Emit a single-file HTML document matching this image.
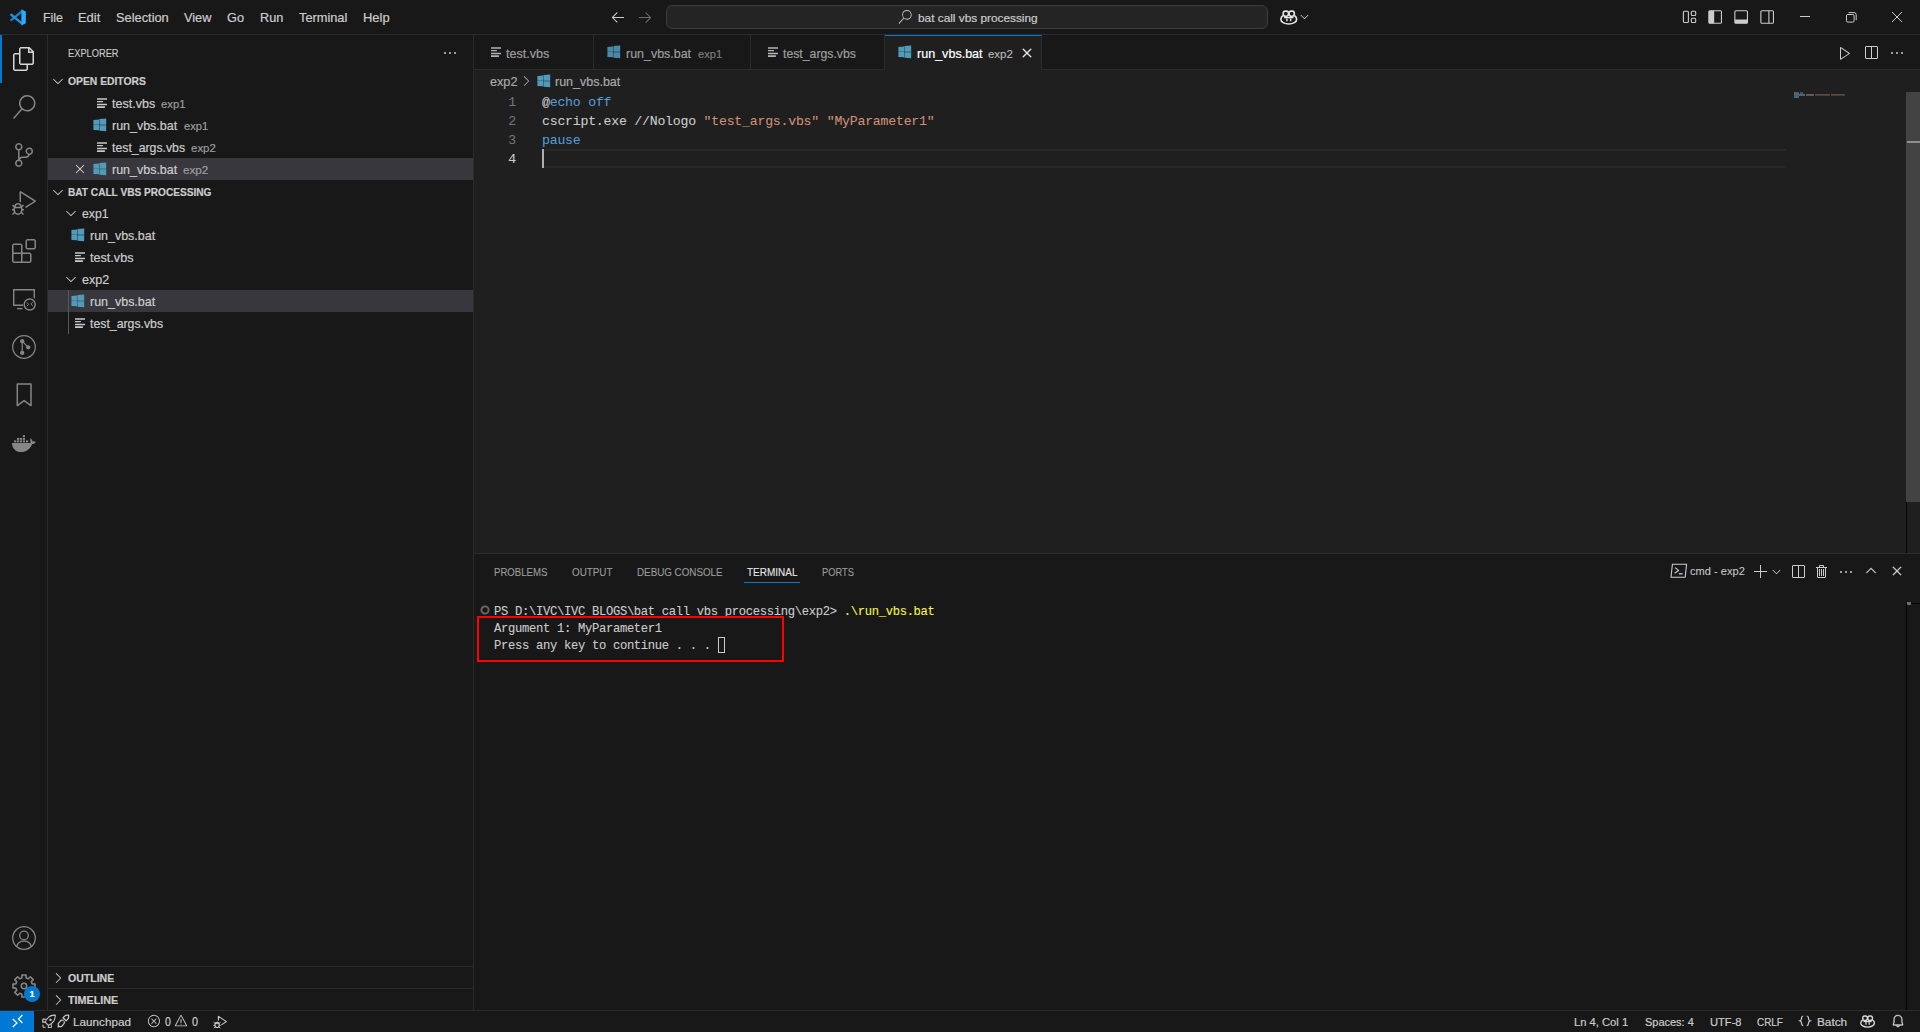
<!DOCTYPE html>
<html lang="en">
<head>
<meta charset="utf-8">
<title>run_vbs.bat - bat call vbs processing - Visual Studio Code</title>
<style>
html,body{margin:0;padding:0;}
body{width:1920px;height:1032px;overflow:hidden;background:#181818;position:relative;
  font-family:"Liberation Sans",sans-serif;font-size:12.5px;color:#cccccc;}
*{box-sizing:border-box;}
.abs{position:absolute;}
.t{position:absolute;white-space:nowrap;height:20px;line-height:20px;transform-origin:0 50%;-webkit-text-stroke:0.2px;}
svg{position:absolute;overflow:visible;}
.f13{font-size:12.6px;}
.f12{font-size:11.7px;}
.f11{font-size:10.7px;-webkit-text-stroke:0.1px;}
.f11.b{-webkit-text-stroke:0.2px;}
.fd{font-size:11.4px;color:#9d9d9d;}
.b{font-weight:bold;}
#titlebar{left:0;top:0;width:1920px;height:35px;background:#181818;border-bottom:1px solid #2b2b2b;}
#activity{left:0;top:35px;width:48px;height:975px;background:#181818;border-right:1px solid #2b2b2b;}
#sidebar{left:48px;top:35px;width:426px;height:975px;background:#181818;border-right:1px solid #2b2b2b;}
#tabs{left:474px;top:35px;width:1446px;height:35px;background:#181818;border-bottom:1px solid #2b2b2b;}
#editor{left:474px;top:70px;width:1446px;height:483px;background:#1f1f1f;}
#panel{left:474px;top:553px;width:1446px;height:457px;background:#181818;border-top:1px solid #2b2b2b;}
#status{left:0;top:1010px;width:1920px;height:22px;background:#181818;border-top:1px solid #2b2b2b;}
.row{position:absolute;left:0;width:425px;height:22px;}
.sel{background:#37373d;}
.tab{position:absolute;top:0;height:35px;border-right:1px solid #2b2b2b;}
.tab.active{background:#1f1f1f;border-top:1px solid #0078d4;height:35px;}
.code{-webkit-text-stroke:0.08px;font-family:"Liberation Mono",monospace;font-size:13.2px;letter-spacing:-0.22px;height:19px;line-height:19px;color:#cccccc;}
.ln{-webkit-text-stroke:0.08px;font-family:"Liberation Mono",monospace;font-size:13.2px;letter-spacing:-0.22px;height:19px;line-height:19px;color:#6e7681;}
.kw{color:#569cd6;}
.str{color:#ce9178;}
.term{-webkit-text-stroke:0.1px;font-family:"Liberation Mono",monospace;font-size:12.2px;letter-spacing:-0.32px;height:17px;line-height:17px;color:#cccccc;}
</style>
</head>
<body>

<!-- TITLE BAR -->
<div id="titlebar" class="abs">
  <svg id="logo" style="left:10px;top:8.6px" width="16" height="16.8" viewBox="0 0 100 100" preserveAspectRatio="none">
    <path d="M73 15 L8 66" stroke="#147fcb" stroke-width="14" stroke-linecap="round" fill="none"/>
    <path d="M73 85 L8 34" stroke="#1c93e2" stroke-width="14" stroke-linecap="round" fill="none"/>
    <path d="M71 2 L99 15 V85 L71 98 Z" fill="#2aaaf9"/>
  </svg>
  <div class="abs" id="cmdc" style="left:666px;top:5px;width:602px;height:24px;border:1px solid #3c3c3c;border-radius:6px;background:#242424;"></div>
  <svg style="left:610px;top:9px" width="16" height="16" viewBox="0 0 16 16"><path d="M7 3.093l-5 5V8.800l5 5 .707-.707-4.146-4.147H14v-1H3.560L7.707 3.800 7 3.093z" fill="#cccccc" /></svg>
  <svg style="left:636.5px;top:9px" width="16" height="16" viewBox="0 0 16 16"><path d="M9 13.887l5-5V8.180l-5-5-.707.707 4.146 4.147H2v1h10.440L8.293 13.180l.707.707z" fill="#6b6b6b" /></svg>
  <svg style="left:898.3px;top:10px" width="14" height="14" viewBox="0 0 24 24"><path d="M15.250 0a8.250 8.250 0 0 0-6.180 13.720L1 22.880l1.120 1 8.050-9.120A8.251 8.251 0 1 0 15.250.010V0zm0 15a6.750 6.750 0 1 1 0-13.500 6.750 6.750 0 0 1 0 13.500z" fill="#cccccc" /></svg>
  <svg style="left:1279.7px;top:9.6px" width="17.5" height="15" viewBox="0 0 18 15" preserveAspectRatio="none" fill="none" stroke="#e4e4e4" stroke-width="1.7" stroke-linejoin="round"><rect x="3.3" y="1.1" width="5.4" height="5.2" rx="2.2"/><rect x="9.3" y="1.1" width="5.4" height="5.2" rx="2.2"/><path d="M3.2 5.6 C1.4 6.6 0.9 8 0.9 9.6 C0.9 11.8 4.4 14 9 14 C13.6 14 17.1 11.8 17.1 9.6 C17.1 8 16.6 6.6 14.8 5.6"/><path d="M4.2 7.6 H13.8" stroke-width="1.4"/><path d="M7.1 8.4 V11.2 M10.9 8.4 V11.2" stroke-width="1.5"/></svg>
  <svg style="left:1298.2px;top:10.4px" width="13" height="13" viewBox="0 0 16 16"><path d="M7.976 10.072l4.357-4.357.62.618L8.284 11h-.618L3 6.333l.619-.618 4.357 4.357z" fill="#cccccc" /></svg>
  <svg style="left:1682px;top:10px" width="16" height="14" viewBox="0 0 16 14" fill="none" stroke="#cccccc" stroke-width="1.1"><rect x="1.4" y="1.3" width="5" height="11.2" rx="1"/><rect x="9.3" y="1.3" width="4.4" height="4.2" rx="1"/><rect x="9.3" y="8.3" width="4.4" height="4.2" rx="1"/></svg>
  <svg style="left:1707.5px;top:10px" width="16" height="14" viewBox="0 0 16 14"><rect x="0.85" y="0.75" width="12.6" height="12.5" rx="1.1" fill="none" stroke="#cccccc" stroke-width="1.1"/><path d="M0.9 1.6 Q0.9 0.8 1.7 0.8 H6.2 V13.2 H1.700 Q0.900 13.200 0.900 12.400 Z" fill="#cccccc"/></svg>
  <svg style="left:1733.5px;top:10px" width="16" height="14" viewBox="0 0 16 14"><rect x="0.85" y="0.75" width="12.6" height="12.5" rx="1.1" fill="none" stroke="#cccccc" stroke-width="1.1"/><path d="M0.9 9.5 H13.4 V12.4 Q13.4 13.2 12.6 13.2 H1.700 Q0.900 13.200 0.900 12.400 Z" fill="#cccccc"/></svg>
  <svg style="left:1759.5px;top:10px" width="16" height="14" viewBox="0 0 16 14" fill="none" stroke="#cccccc" stroke-width="1.1"><rect x="0.85" y="0.75" width="12.6" height="12.5" rx="1.1"/><path d="M8.9 0.8 V13.2"/></svg>
  <svg style="left:1800px;top:12px" width="10" height="10" viewBox="0 0 10 10" stroke="#cccccc" stroke-width="1" fill="none"><path d="M0 4.5 H10"/></svg>
  <svg style="left:1845.5px;top:12px" width="11" height="11" viewBox="0 0 11 11" stroke="#cccccc" stroke-width="1" fill="none"><rect x="0.5" y="2.5" width="7.6" height="7.6" rx="1.3"/><path d="M2.6 0.6 H8 Q10.2 0.6 10.2 2.8 V8.2"/></svg>
  <svg style="left:1892px;top:12px" width="10" height="10" viewBox="0 0 10 10" stroke="#cccccc" stroke-width="1" fill="none"><path d="M0 0 L10 10 M10 0 L0 10"/></svg>
  <div class="t f13" id="m-file" style="left:42.54px;top:8.00px;transform:scaleX(0.9856);">File</div>
  <div class="t f13" id="m-edit" style="left:77.77px;top:8.00px;transform:scaleX(1.0260);">Edit</div>
  <div class="t f13" id="m-sel" style="left:115.71px;top:8.00px;transform:scaleX(1.0181);">Selection</div>
  <div class="t f13" id="m-view" style="left:183.80px;top:8.00px;transform:scaleX(1.0127);">View</div>
  <div class="t f13" id="m-go" style="left:227.17px;top:8.00px;transform:scaleX(1.0117);">Go</div>
  <div class="t f13" id="m-run" style="left:259.89px;top:8.00px;transform:scaleX(1.0041);">Run</div>
  <div class="t f13" id="m-term" style="left:298.79px;top:8.00px;transform:scaleX(1.0153);">Terminal</div>
  <div class="t f13" id="m-help" style="left:362.77px;top:8.00px;transform:scaleX(1.0290);">Help</div>
  <div class="t f12" id="cc" style="left:917.89px;top:8.00px;transform:scaleX(1.0119);">bat call vbs processing</div>
</div>

<!-- ACTIVITY BAR -->
<div id="activity" class="abs">
  <div class="abs" style="left:0;top:0;width:2px;height:48px;background:#0078d4"></div>
  <svg style="left:12px;top:12px" width="24" height="24" viewBox="0 0 24 24"><path d="M17.5 0h-9L7 1.5V6H2.5L1 7.5v15.07L2.5 24h12.07L16 22.57V18h4.7l1.3-1.43V4.5L17.5 0zm0 2.12l2.38 2.38H17.5V2.12zm-3 20.38h-12v-15H7v9.07L8.5 18h6v4.5zm6-6h-12v-15H16V6h4.5v10.5z" fill="#d7d7d7" /></svg>
  <svg style="left:12px;top:60px" width="24" height="24" viewBox="0 0 24 24"><path d="M15.25 0a8.25 8.25 0 0 0-6.18 13.72L1 22.88l1.12 1 8.05-9.12A8.251 8.251 0 1 0 15.25.01V0zm0 15a6.75 6.75 0 1 1 0-13.5 6.75 6.75 0 0 1 0 13.5z" fill="#868686" /></svg>
  <svg style="left:12px;top:108px" width="24" height="24" viewBox="0 0 24 24"><path d="M21.007 8.222A3.738 3.738 0 0 0 15.045 5.2a3.737 3.737 0 0 0 1.156 6.583 2.988 2.988 0 0 1-2.668 1.67h-2.99a4.456 4.456 0 0 0-2.989 1.165V7.4a3.737 3.737 0 1 0-1.494 0v9.117a3.776 3.776 0 1 0 1.816.099 2.99 2.99 0 0 1 2.668-1.667h2.99a4.484 4.484 0 0 0 4.223-3.039 3.736 3.736 0 0 0 3.25-3.687zM4.565 3.738a2.242 2.242 0 1 1 4.484 0 2.242 2.242 0 0 1-4.484 0zm4.484 16.441a2.242 2.242 0 1 1-4.484 0 2.242 2.242 0 0 1 4.484 0zm8.221-9.715a2.242 2.242 0 1 1 0-4.485 2.242 2.242 0 0 1 0 4.485z" fill="#868686" /></svg>
  <svg style="left:12px;top:156px" width="24" height="24" viewBox="0 0 24 24"><path d="M10.94 13.5l-1.32 1.32a3.73 3.73 0 0 0-7.24 0L1.06 13.5 0 14.56l1.72 1.72-.22.22V18H0v1.5h1.5v.08c.077.489.214.966.41 1.42L0 22.94 1.06 24l1.65-1.65A4.308 4.308 0 0 0 6 24a4.31 4.31 0 0 0 3.29-1.65L10.94 24 12 22.94 10.09 21c.198-.464.336-.951.41-1.45v-.1H12V18h-1.5v-1.5l-.22-.22L12 14.56l-1.06-1.06zM6 13.5a2.25 2.25 0 0 1 2.25 2.25h-4.5A2.25 2.25 0 0 1 6 13.5zm3 6a3.33 3.33 0 0 1-3 3 3.33 3.33 0 0 1-3-3v-2.25h6v2.25zm14.76-9.9v1.26L13.5 17.37V15.6l8.5-5.37L9 2v9.46a5.07 5.07 0 0 0-1.5-.72V.63L8.64 0l15.12 9.6z" fill="#868686" /></svg>
  <svg style="left:12px;top:204px" width="24" height="24" viewBox="0 0 24 24"><path d="M13.5 1.5L15 0h7.5L24 1.5V9l-1.5 1.5H15L13.5 9V1.5zm1.5 0V9h7.5V1.5H15zM0 15V6l1.5-1.5H9L10.5 6v7.5H18l1.5 1.5v7.5L18 24H1.5L0 22.5V15zm9-1.5V6H1.5v7.5H9zM9 15H1.5v7.5H9V15zm1.500 7.500H18V15h-7.500v7.500z" fill="#868686" /></svg>
  <svg style="left:12px;top:252px" width="24" height="24" viewBox="0 0 24 24" fill="none" stroke="#868686" stroke-width="1.4"><path d="M11.2 18.2 H1.7 V2.7 H22.3 V11.2"/><path d="M5 21.6 H10.6"/><circle cx="17.7" cy="17.5" r="5.5"/><path d="M14.9 15.4 L16.6 17.3 L14.9 19.2 M20.7 15.0 L19.0 16.9 L20.7 18.8" stroke-width="1"/></svg>
  <svg style="left:12px;top:300px" width="24" height="24" viewBox="0 0 24 24" fill="none" stroke="#868686"><circle cx="12" cy="12" r="11.3" stroke-width="1.2"/><path d="M10.2 6.2 V18 M10.2 6.2 L16.2 12.3" stroke-width="1.2"/><circle cx="10.2" cy="6.2" r="2.15" fill="#868686" stroke="none"/><circle cx="16.2" cy="12.3" r="2.15" fill="#868686" stroke="none"/><circle cx="10.2" cy="17.9" r="2.15" fill="#868686" stroke="none"/></svg>
  <svg style="left:12px;top:348px" width="24" height="24" viewBox="0 0 24 24" fill="none" stroke="#868686" stroke-width="1.5" stroke-linejoin="round"><path d="M5.3 1.1 H19.0 V22.6 L12.15 17.6 L5.3 22.6 Z"/></svg>
  <svg style="left:11px;top:398px" width="26" height="20" viewBox="0 0 26 20" fill="#868686"><path d="M0.9 9.9 H19.6 C19.3 8 19 6.5 19.4 5.2 C20.8 6 21.4 7.4 21.6 8.4 C22.6 8 23.8 8.2 24.7 8.9 C24 10.4 22.6 11 21.2 10.9 C19.4 15.6 15.4 19 10.2 19 C4.6 19 1.2 15.4 0.9 9.9 Z"/><rect x="3.1" y="7.35" width="2.2" height="2.0"/><rect x="5.95" y="7.35" width="2.2" height="2.0"/><rect x="8.85" y="7.35" width="2.2" height="2.0"/><rect x="11.8" y="7.35" width="2.2" height="2.0"/><rect x="14.9" y="7.35" width="2.2" height="2.0"/><rect x="5.95" y="4.9" width="2.2" height="2.0"/><rect x="8.85" y="4.9" width="2.2" height="2.0"/><rect x="11.8" y="4.9" width="2.2" height="2.0"/><rect x="11.8" y="2.15" width="2.2" height="2.0"/></svg>
  <svg style="left:12px;top:891px" width="24" height="24" viewBox="0 0 24 24" fill="none" stroke="#868686" stroke-width="1.3"><circle cx="12" cy="12" r="11.3"/><circle cx="12" cy="9.4" r="4.3"/><path d="M4.8 20.6 C5.6 16.6 8.6 15.2 12 15.2 C15.4 15.2 18.4 16.6 19.2 20.6"/></svg>
  <svg style="left:0;top:0" width="48" height="48"><path d="M21.90 942.87 L21.96 939.99 L26.04 939.99 L26.10 942.87 L28.26 943.76 L30.34 941.77 L33.23 944.66 L31.24 946.74 L32.13 948.90 L35.01 948.96 L35.01 953.04 L32.13 953.10 L31.24 955.26 L33.23 957.34 L30.34 960.23 L28.26 958.24 L26.10 959.13 L26.04 962.01 L21.96 962.01 L21.90 959.13 L19.74 958.24 L17.66 960.23 L14.77 957.34 L16.76 955.26 L15.87 953.10 L12.99 953.04 L12.99 948.96 L15.87 948.90 L16.76 946.74 L14.77 944.66 L17.66 941.77 L19.74 943.76 Z" fill="none" stroke="#868686" stroke-width="1.6" stroke-linejoin="round"/><circle cx="24" cy="951" r="2.7" fill="none" stroke="#868686" stroke-width="1.5"/></svg>
  <div class="abs" style="left:24px;top:951px;width:16px;height:16px;border-radius:8px;background:#0078d4"></div>
  <div class="t" style="left:24px;top:951px;width:16px;height:16px;line-height:16px;text-align:center;font-size:9px;font-weight:bold;color:#ffffff">1</div>

</div>

<!-- SIDEBAR -->
<div id="sidebar" class="abs">
  <div class="row sel" style="top:123px"></div>
  <div class="row sel" style="top:255px"></div>
  <div class="abs" style="left:20px;top:255px;width:1px;height:44px;background:#585858"></div>
  <div class="abs" style="left:0;top:931px;width:425px;height:1px;background:#2b2b2b"></div>
  <div class="abs" style="left:0;top:953px;width:425px;height:1px;background:#2b2b2b"></div>
  <svg style="left:394px;top:10px" width="16" height="16" viewBox="0 0 16 16"><path d="M4 8a1 1 0 1 1-2 0 1 1 0 0 1 2 0zm5 0a1 1 0 1 1-2 0 1 1 0 0 1 2 0zm5 0a1 1 0 1 1-2 0 1 1 0 0 1 2 0z" fill="#cccccc" /></svg>
  <svg style="left:2px;top:38px" width="16" height="16" viewBox="0 0 16 16"><path d="M7.976 10.072l4.357-4.357.62.618L8.284 11h-.618L3 6.333l.619-.618 4.357 4.357z" fill="#cccccc" /></svg>
  <svg style="left:2px;top:149px" width="16" height="16" viewBox="0 0 16 16"><path d="M7.976 10.072l4.357-4.357.62.618L8.284 11h-.618L3 6.333l.619-.618 4.357 4.357z" fill="#cccccc" /></svg>
  <svg style="left:15px;top:170px" width="16" height="16" viewBox="0 0 16 16"><path d="M7.976 10.072l4.357-4.357.62.618L8.284 11h-.618L3 6.333l.619-.618 4.357 4.357z" fill="#cccccc" /></svg>
  <svg style="left:15px;top:236px" width="16" height="16" viewBox="0 0 16 16"><path d="M7.976 10.072l4.357-4.357.62.618L8.284 11h-.618L3 6.333l.619-.618 4.357 4.357z" fill="#cccccc" /></svg>
  <svg style="left:2px;top:935px" width="16" height="16" viewBox="0 0 16 16"><path d="M10.072 8.024L5.715 3.667l.618-.62L11 7.716v.618L6.333 13l-.618-.619 4.357-4.357z" fill="#cccccc" /></svg>
  <svg style="left:2px;top:957px" width="16" height="16" viewBox="0 0 16 16"><path d="M10.072 8.024L5.715 3.667l.618-.62L11 7.716v.618L6.333 13l-.618-.619 4.357-4.357z" fill="#cccccc" /></svg>
  <svg style="left:24px;top:126.3px" width="16" height="16" viewBox="0 0 16 16"><path d="M8 8.707l3.646 3.647.708-.707L8.707 8l3.647-3.646-.707-.708L8 7.293 4.354 3.646l-.707.708L7.293 8l-3.646 3.646.707.708L8 8.707z" fill="#cccccc" /></svg>
  <svg style="left:49.1px;top:63px" width="11" height="11" viewBox="0 0 11 11"><path d="M0 0.2 H10 V1.75 H0 Z M0 3.1 H5.9 V4.15 H0 Z M0 5.8 H10 V7.15 H0 Z M0 8.35 H7.9 V9.9 H0 Z" fill="#c8c8c8"/></svg>
  <svg style="left:45px;top:83px" width="14" height="14" viewBox="0 0 14 14"><path d="M0.4 1.95 L6.0 1.6 V6.85 H0.4 Z M0.4 7.1 H6.0 V12.3 L0.4 11.95 Z M6.4 0.95 L13.2 0.5 V6.8 H6.4 Z M6.4 7.15 H13.2 V13.3 L6.4 12.85 Z" fill="#519aba"/></svg>
  <svg style="left:49.1px;top:107px" width="11" height="11" viewBox="0 0 11 11"><path d="M0 0.2 H10 V1.75 H0 Z M0 3.1 H5.9 V4.15 H0 Z M0 5.8 H10 V7.15 H0 Z M0 8.35 H7.9 V9.9 H0 Z" fill="#c8c8c8"/></svg>
  <svg style="left:45px;top:127px" width="14" height="14" viewBox="0 0 14 14"><path d="M0.4 1.95 L6.0 1.6 V6.85 H0.4 Z M0.4 7.1 H6.0 V12.3 L0.4 11.95 Z M6.4 0.95 L13.2 0.5 V6.8 H6.4 Z M6.4 7.15 H13.2 V13.3 L6.4 12.85 Z" fill="#519aba"/></svg>
  <svg style="left:23.1px;top:193px" width="14" height="14" viewBox="0 0 14 14"><path d="M0.4 1.95 L6.0 1.6 V6.85 H0.4 Z M0.4 7.1 H6.0 V12.3 L0.4 11.95 Z M6.4 0.95 L13.2 0.5 V6.8 H6.4 Z M6.4 7.15 H13.2 V13.3 L6.4 12.85 Z" fill="#519aba"/></svg>
  <svg style="left:27.3px;top:217px" width="11" height="11" viewBox="0 0 11 11"><path d="M0 0.2 H10 V1.75 H0 Z M0 3.1 H5.9 V4.15 H0 Z M0 5.8 H10 V7.15 H0 Z M0 8.35 H7.9 V9.9 H0 Z" fill="#c8c8c8"/></svg>
  <svg style="left:23.1px;top:259px" width="14" height="14" viewBox="0 0 14 14"><path d="M0.4 1.95 L6.0 1.6 V6.85 H0.4 Z M0.4 7.1 H6.0 V12.3 L0.4 11.95 Z M6.4 0.95 L13.2 0.5 V6.8 H6.4 Z M6.4 7.15 H13.2 V13.3 L6.4 12.85 Z" fill="#519aba"/></svg>
  <svg style="left:27.3px;top:283px" width="11" height="11" viewBox="0 0 11 11"><path d="M0 0.2 H10 V1.75 H0 Z M0 3.1 H5.9 V4.15 H0 Z M0 5.8 H10 V7.15 H0 Z M0 8.35 H7.9 V9.9 H0 Z" fill="#c8c8c8"/></svg>
  <div class="t f11" id="sb-title" style="left:19.87px;top:8.00px;transform:scaleX(0.8680);">EXPLORER</div>
  <div class="t f11 b" id="oe-h" style="left:19.55px;top:36.00px;transform:scaleX(0.9660);">OPEN EDITORS</div>
  <div class="t f13" id="oe1" style="left:63.89px;top:59.00px;transform:scaleX(0.9944);">test.vbs</div>
  <div class="t fd" id="oe1d" style="left:113.05px;top:59.00px;transform:scaleX(0.9878);">exp1</div>
  <div class="t f13" id="oe2" style="left:63.55px;top:81.00px;transform:scaleX(0.9899);">run_vbs.bat</div>
  <div class="t fd" id="oe2d" style="left:135.50px;top:81.00px;transform:scaleX(0.9775);">exp1</div>
  <div class="t f13" id="oe3" style="left:63.89px;top:103.00px;transform:scaleX(0.9759);">test_args.vbs</div>
  <div class="t fd" id="oe3d" style="left:143.08px;top:103.00px;transform:scaleX(1.0000);">exp2</div>
  <div class="t f13" id="oe4" style="left:63.50px;top:125.00px;transform:scaleX(0.9907);">run_vbs.bat</div>
  <div class="t fd" id="oe4d" style="left:134.65px;top:125.00px;transform:scaleX(1.0269);">exp2</div>
  <div class="t f11 b" id="ws-h" style="left:19.73px;top:147.00px;transform:scaleX(0.9457);">BAT CALL VBS PROCESSING</div>
  <div class="t f13" id="t1" style="left:33.79px;top:169.00px;transform:scaleX(0.9745);">exp1</div>
  <div class="t f13" id="t2" style="left:41.50px;top:191.00px;transform:scaleX(0.9896);">run_vbs.bat</div>
  <div class="t f13" id="t3" style="left:42.19px;top:213.00px;transform:scaleX(1.0028);">test.vbs</div>
  <div class="t f13" id="t4" style="left:33.75px;top:235.00px;transform:scaleX(0.9962);">exp2</div>
  <div class="t f13" id="t5" style="left:41.80px;top:257.00px;transform:scaleX(0.9904);">run_vbs.bat</div>
  <div class="t f13" id="t6" style="left:42.19px;top:279.00px;transform:scaleX(0.9759);">test_args.vbs</div>
  <div class="t f11 b" id="ol" style="left:19.55px;top:933.00px;transform:scaleX(0.9862);">OUTLINE</div>
  <div class="t f11 b" id="tl" style="left:19.58px;top:955.00px;transform:scaleX(1.0080);">TIMELINE</div>
</div>

<!-- TABS -->
<div id="tabs" class="abs">
  <div class="tab" style="left:0;width:120px"></div>
  <div class="tab" style="left:120px;width:157px"></div>
  <div class="tab" style="left:277px;width:134px"></div>
  <div class="tab active" style="left:411px;width:157px"></div>
  <svg style="left:17.3px;top:12px" width="11" height="11" viewBox="0 0 11 11"><path d="M0 0.2 H10 V1.75 H0 Z M0 3.1 H5.9 V4.15 H0 Z M0 5.8 H10 V7.15 H0 Z M0 8.35 H7.9 V9.9 H0 Z" fill="#b4b4b4"/></svg>
  <svg style="left:133px;top:10.3px" width="14" height="14" viewBox="0 0 14 14"><path d="M0.4 1.95 L6.0 1.6 V6.85 H0.4 Z M0.4 7.1 H6.0 V12.3 L0.4 11.95 Z M6.4 0.95 L13.2 0.5 V6.8 H6.4 Z M6.4 7.15 H13.2 V13.3 L6.4 12.85 Z" fill="#4a8aa8"/></svg>
  <svg style="left:294.4px;top:12px" width="11" height="11" viewBox="0 0 11 11"><path d="M0 0.2 H10 V1.75 H0 Z M0 3.1 H5.9 V4.15 H0 Z M0 5.8 H10 V7.15 H0 Z M0 8.35 H7.9 V9.9 H0 Z" fill="#b4b4b4"/></svg>
  <svg style="left:424px;top:10.3px" width="14" height="14" viewBox="0 0 14 14"><path d="M0.4 1.95 L6.0 1.6 V6.85 H0.4 Z M0.4 7.1 H6.0 V12.3 L0.4 11.95 Z M6.4 0.95 L13.2 0.5 V6.8 H6.4 Z M6.4 7.15 H13.2 V13.3 L6.4 12.85 Z" fill="#519aba"/></svg>
  <svg style="left:544.9px;top:10px" width="16" height="16" viewBox="0 0 16 16"><path d="M8 8.707l3.646 3.647.708-.707L8.707 8l3.647-3.646-.707-.708L8 7.293 4.354 3.646l-.707.708L7.293 8l-3.646 3.646.707.708L8 8.707z" fill="#f0f0f0" stroke="#f0f0f0" stroke-width="0.45"/></svg>
  <svg style="left:1362.5px;top:10px" width="16" height="16" viewBox="0 0 16 16"><path d="M3.780 2L3 2.410v12l.780.420 9-6V8l-9-6zM4 13.480V3.350l7.600 5.070L4 13.480z" fill="#cccccc" /></svg>
  <svg style="left:1388.6px;top:10px" width="16" height="16" viewBox="0 0 16 16"><path d="M14 1H3L2 2v11l1 1h11l1-1V2l-1-1zM8 13H3V2h5v11zm6 0H9V2h5v11z" fill="#cccccc" /></svg>
  <svg style="left:1415px;top:10px" width="16" height="16" viewBox="0 0 16 16"><path d="M4 8a1 1 0 1 1-2 0 1 1 0 0 1 2 0zm5 0a1 1 0 1 1-2 0 1 1 0 0 1 2 0zm5 0a1 1 0 1 1-2 0 1 1 0 0 1 2 0z" fill="#cccccc" /></svg>
  <div class="t f13" id="tab1" style="left:32.19px;top:9.00px;transform:scaleX(0.9982);color:#9d9d9d">test.vbs</div>
  <div class="t f13" id="tab2" style="left:151.81px;top:9.00px;transform:scaleX(0.9887);color:#9d9d9d">run_vbs.bat</div>
  <div class="t fd" id="tab2d" style="left:223.86px;top:9.00px;transform:scaleX(0.9735);color:#7c7c7c">exp1</div>
  <div class="t f13" id="tab3" style="left:308.69px;top:9.00px;transform:scaleX(0.9734);color:#9d9d9d">test_args.vbs</div>
  <div class="t f13" id="tab4" style="left:442.89px;top:9.00px;transform:scaleX(0.9967);color:#ffffff">run_vbs.bat</div>
  <div class="t fd" id="tab4d" style="left:513.82px;top:9.00px;transform:scaleX(1.0054);color:#bcbcbc;-webkit-text-stroke:0.1px">exp2</div>
</div>

<!-- EDITOR -->
<div id="editor" class="abs">
  <div class="abs" style="left:68px;top:79px;width:1244px;height:19px;border-top:2px solid #282828;border-bottom:2px solid #282828;"></div>
  <div class="t ln" style="left:34.3px;top:23px">1</div>
  <div class="t ln" style="left:34.3px;top:42px">2</div>
  <div class="t ln" style="left:34.3px;top:61px">3</div>
  <div class="t ln" style="left:34.3px;top:80px;color:#cccccc">4</div>
  <div class="t code" style="left:68px;top:23px">@<span class="kw">echo</span> <span class="kw">off</span></div>
  <div class="t code" style="left:68px;top:42px">cscript.exe //Nologo <span class="str">"test_args.vbs"</span> <span class="str">"MyParameter1"</span></div>
  <div class="t code" style="left:68px;top:61px"><span class="kw">pause</span></div>
  <div class="abs" style="left:68px;top:79px;width:2px;height:19px;background:#aeafad"></div>
  <div class="abs" style="left:1432px;top:22px;width:1px;height:461px;background:#03050a"></div>
  <div class="abs" style="left:1432px;top:22px;width:14px;height:410px;background:#434343"></div>
  <div class="abs" style="left:1433px;top:71px;width:13px;height:2px;background:#8e8e8e"></div>
  <svg style="left:44px;top:3px" width="16" height="16" viewBox="0 0 16 16"><path d="M10.072 8.024L5.715 3.667l.618-.62L11 7.716v.618L6.333 13l-.618-.619 4.357-4.357z" fill="#a9a9a9" /></svg>
  <svg style="left:62.8px;top:4.2px" width="14" height="14" viewBox="0 0 14 14"><path d="M0.4 1.95 L6.0 1.6 V6.85 H0.4 Z M0.4 7.1 H6.0 V12.3 L0.4 11.95 Z M6.4 0.95 L13.2 0.5 V6.8 H6.4 Z M6.4 7.15 H13.2 V13.3 L6.4 12.85 Z" fill="#519aba"/></svg>
  <svg style="left:1320px;top:22px" width="56" height="8" viewBox="0 0 56 8"><rect x="0" y="0" width="1" height="2" fill="#b0b0b0" opacity=".5"/><rect x="1" y="0.2" width="4" height="1.8" fill="#569cd6" opacity=".6"/><rect x="6" y="0.2" width="3" height="1.6" fill="#569cd6" opacity=".55"/><rect x="0" y="2.1" width="11" height="1.7" fill="#c8c8c8" opacity=".45"/><rect x="12" y="2.1" width="8" height="1.7" fill="#c8c8c8" opacity=".42"/><rect x="21" y="2.1" width="15" height="1.5" fill="#ce9178" opacity=".42"/><rect x="37" y="2.1" width="14" height="1.5" fill="#ce9178" opacity=".42"/><rect x="0" y="4" width="5" height="2" fill="#569cd6" opacity=".6"/></svg>
  <div class="t f13" id="bc1" style="left:15.60px;top:1.50px;transform:scaleX(1.0046);color:#a9a9a9">exp2</div>
  <div class="t f13" id="bc2" style="left:80.79px;top:1.50px;transform:scaleX(0.9920);color:#a9a9a9">run_vbs.bat</div>
</div>

<!-- PANEL -->
<div id="panel" class="abs">
  <div class="abs" style="left:270px;top:28px;width:56px;height:1px;background:#0078d4"></div>
  <div class="t term" style="left:20px;top:50px">PS D:\IVC\IVC BLOGS\bat call vbs processing\exp2&gt; <span style="color:#f5f543">.\run_vbs.bat</span></div>
  <div class="t term" style="left:20px;top:67px">Argument 1: MyParameter1</div>
  <div class="t term" style="left:20px;top:84px">Press any key to continue . . . </div>
  <div class="abs" style="left:244px;top:83px;width:7px;height:16px;border:1px solid #cccccc"></div>
  <div class="abs" style="left:3px;top:62px;width:307px;height:46px;border:2px solid #ff0000"></div>
  <div class="abs" style="left:1432px;top:49px;width:1px;height:407px;background:#03050a"></div>
  <div class="abs" style="left:1432px;top:49px;width:14px;height:1px;background:#03050a"></div>
  <div class="abs" style="left:1433px;top:48px;width:4px;height:3px;background:#6b6b6b"></div>
  <svg style="left:1195.5px;top:8.7px" width="18" height="16" viewBox="0 0 18 16" fill="none" stroke="#cccccc" stroke-width="1.1" stroke-linejoin="round"><path d="M2.4 1.2 H16.6 L15.2 14.3 H1 Z"/><path d="M5 4.6 L8.6 7.4 L4.6 10.2" stroke-width="1.2"/><path d="M8.8 10.8 H12.6" stroke-width="1.3"/></svg>
  <svg style="left:1278.5px;top:10px" width="16" height="16" viewBox="0 0 16 16"><path d="M14 7v1H8v6H7V8H1V7h6V1h1v6h6z" fill="#cccccc" /></svg>
  <svg style="left:1295.8px;top:11.4px" width="13" height="13" viewBox="0 0 16 16"><path d="M7.976 10.072l4.357-4.357.62.618L8.284 11h-.618L3 6.333l.619-.618 4.357 4.357z" fill="#cccccc" /></svg>
  <svg style="left:1315.7px;top:10.3px" width="16" height="16" viewBox="0 0 16 16"><path d="M14 1H3L2 2v11l1 1h11l1-1V2l-1-1zM8 13H3V2h5v11zm6 0H9V2h5v11z" fill="#cccccc" /></svg>
  <svg style="left:1339.8px;top:10px" width="16" height="16" viewBox="0 0 16 16"><path d="M10 3h3v1h-1v9l-1 1H4l-1-1V4H2V3h3V2a1 1 0 0 1 1-1h3a1 1 0 0 1 1 1v1zM9 2H6v1h3V2zM4 13h7V4H4v9zm2-8H5v7h1V5zm1 0h1v7H7V5zm2 0h1v7H9V5z" fill="#cccccc" /></svg>
  <svg style="left:1363.8px;top:9.8px" width="16" height="16" viewBox="0 0 16 16"><path d="M4 8a1 1 0 1 1-2 0 1 1 0 0 1 2 0zm5 0a1 1 0 1 1-2 0 1 1 0 0 1 2 0zm5 0a1 1 0 1 1-2 0 1 1 0 0 1 2 0z" fill="#cccccc" /></svg>
  <svg style="left:1389px;top:9.3px" width="16" height="16" viewBox="0 0 16 16"><path d="M8.024 5.928l-4.357 4.357-.62-.618L7.716 5h.618L13 9.667l-.619.618-4.357-4.357z" fill="#d4d4d4" stroke="#d4d4d4" stroke-width="0.3"/></svg>
  <svg style="left:1415.2px;top:9.1px" width="16" height="16" viewBox="0 0 16 16"><path d="M8 8.707l3.646 3.647.708-.707L8.707 8l3.647-3.646-.707-.708L8 7.293 4.354 3.646l-.707.708L7.293 8l-3.646 3.646.707.708L8 8.707z" fill="#d4d4d4" stroke="#d4d4d4" stroke-width="0.35"/></svg>
  <svg style="left:5px;top:50.4px" width="12" height="12" viewBox="0 0 12 12"><circle cx="6" cy="6" r="3.6" fill="none" stroke="#686868" stroke-width="1.9"/></svg>
  <div class="t f11" id="p1" style="left:19.62px;top:8.25px;transform:scaleX(0.8974);color:#9d9d9d">PROBLEMS</div>
  <div class="t f11" id="p2" style="left:97.89px;top:8.25px;transform:scaleX(0.9213);color:#9d9d9d">OUTPUT</div>
  <div class="t f11" id="p3" style="left:162.88px;top:8.25px;transform:scaleX(0.9181);color:#9d9d9d">DEBUG CONSOLE</div>
  <div class="t f11" id="p4" style="left:272.65px;top:8.25px;transform:scaleX(0.9339);color:#e7e7e7">TERMINAL</div>
  <div class="t f11" id="p5" style="left:347.50px;top:8.25px;transform:scaleX(0.8750);color:#9d9d9d">PORTS</div>
  <div class="t f12" id="pt" style="left:1216.01px;top:7.00px;transform:scaleX(0.9502);-webkit-text-stroke:0.05px">cmd - exp2</div>
</div>

<!-- STATUS BAR -->
<div id="status" class="abs">
  <div class="abs" style="left:0;top:0px;width:34px;height:21px;background:#0078d4"></div>
  <svg style="left:11px;top:2px" width="14" height="16" viewBox="0 0 14 16" fill="none" stroke="#ffffff" stroke-width="1.2"><path d="M1.8 6 L6 10 L1.8 14 M11.4 2 L7.4 6 L11.4 10"/></svg>
  <svg style="left:41.6px;top:2.9px" width="14.2" height="14.2" viewBox="0 0 15 15" fill="none" stroke="#cccccc" stroke-width="1.1" stroke-linejoin="round"><path d="M14 1.2 C9.5 1 5.5 3.5 3.3 8.6 L6.8 12 C11.6 9.8 14.2 5.8 14 1.2 Z"/><path d="M4.6 5.6 L1 5.2 L0.7 8.6 L3.3 8.6 M9.6 10.4 L10 14 L6.6 14.2 L6.8 12"/><circle cx="9" cy="6.2" r="1.3" fill="#cccccc" stroke="none"/><path d="M1 11.2 V14 H3.8" stroke-width="1"/></svg>
  <svg style="left:56.5px;top:3px" width="13" height="14" viewBox="0 0 13 14" fill="none" stroke="#cccccc" stroke-width="1.2" stroke-linejoin="round"><path d="M8.6 1.4 L11.8 1 L11.4 4.4 L9.2 6.8 L6 3.8 Z"/><path d="M6.6 6.4 L4.4 6 L1.8 8.8 C0.8 10 1 11.4 2 12.2 C3 13 4.4 12.8 5.2 11.8 L7.4 9 L7 7.2"/><path d="M0.6 13.4 L2 12"/></svg>
  <svg style="left:147px;top:3.1px" width="14" height="14" viewBox="0 0 16 16"><path d="M8.600 1c1.600.100 3.100.900 4.200 2 1.300 1.400 2 3.100 2 5.100 0 1.600-.600 3.100-1.600 4.400-1 1.200-2.400 2.100-4 2.400-1.600.300-3.200.100-4.600-.700-1.400-.800-2.500-2-3.100-3.500C.900 9.200.800 7.500 1.300 6c.500-1.600 1.400-2.900 2.800-3.800C5.400 1.300 7 .900 8.600 1zm.500 12.900c1.300-.300 2.500-1 3.400-2.100.800-1.100 1.300-2.400 1.200-3.800 0-1.600-.600-3.200-1.700-4.300-1-1-2.200-1.600-3.600-1.700-1.300-.100-2.700.200-3.800 1-1.100.800-1.900 1.900-2.300 3.300-.400 1.300-.400 2.700.200 4 .600 1.300 1.500 2.300 2.700 3 1.200.700 2.600.900 3.900.600zM7.900 7.500L10.300 5l.700.700-2.400 2.500 2.400 2.500-.700.700-2.400-2.500-2.400 2.500-.700-.700 2.400-2.500-2.400-2.500.700-.700 2.400 2.500z" fill="#cccccc" /></svg>
  <svg style="left:174.1px;top:3.4px" width="14" height="14" viewBox="0 0 16 16"><path d="M7.560 1h.880l6.540 12.260-.440.740H1.440L1 13.260 7.560 1zM8 2.280L2.280 13H13.700L8 2.280zM8.625 12v-1h-1.250v1h1.250zm-1.250-2V6h1.250v4h-1.250z" fill="#cccccc" /></svg>
  <svg style="left:213px;top:4px" width="15" height="14" viewBox="0 0 15 14" fill="none" stroke="#cccccc" stroke-width="1.1" stroke-linejoin="round"><path d="M5.4 5.6 V1.4 L13.4 6.6 L8.4 9.9"/><ellipse cx="4.1" cy="9.9" rx="2.1" ry="2.6"/><path d="M2 8.6 H6.2 M0.6 7.2 L2 8.4 M7.6 7.2 L6.2 8.4 M0.4 10.4 H2 M6.2 10.4 H7.8 M0.8 13.2 L2.2 12 M7.4 13.2 L6 12" stroke-width="0.9"/></svg>
  <svg style="left:1798.6px;top:4.4px" width="12" height="12" viewBox="0 0 12 12" fill="none" stroke="#cccccc" stroke-width="1.2"><path d="M4.2 1 C2.6 1 2.6 1.6 2.6 3 C2.6 4.6 2.4 5.4 1 5.8 C2.4 6.2 2.6 7 2.6 8.6 C2.6 10 2.6 10.6 4.2 10.6 M7.8 1 C9.4 1 9.4 1.6 9.4 3 C9.4 4.6 9.6 5.4 11 5.8 C9.600 6.200 9.400 7 9.400 8.600 C9.400 10 9.400 10.600 7.800 10.600"/></svg>
  <svg style="left:1860.3px;top:3.6px" width="15.2" height="13" viewBox="0 0 18 15" preserveAspectRatio="none" fill="none" stroke="#dcdcdc" stroke-width="1.6" stroke-linejoin="round"><rect x="3.3" y="1.1" width="5.4" height="5.2" rx="2.2"/><rect x="9.3" y="1.1" width="5.4" height="5.2" rx="2.2"/><path d="M3.2 5.6 C1.4 6.6 0.9 8 0.9 9.6 C0.9 11.8 4.4 14 9 14 C13.6 14 17.1 11.8 17.1 9.6 C17.1 8 16.6 6.6 14.8 5.6"/><path d="M4.2 7.6 H13.8" stroke-width="1.4"/><path d="M7.1 8.4 V11.2 M10.9 8.4 V11.2" stroke-width="1.5"/></svg>
  <svg style="left:1891px;top:3px" width="14" height="14" viewBox="0 0 16 16"><path d="M13.377 10.573a7.630 7.630 0 0 1-.383-2.380V6.195a5.115 5.115 0 0 0-1.268-3.446 5.138 5.138 0 0 0-3.242-1.722c-.694-.072-1.400 0-2.070.227-.670.215-1.280.574-1.794 1.053a4.923 4.923 0 0 0-1.208 1.675 5.067 5.067 0 0 0-.431 2.022v2.200a7.610 7.610 0 0 1-.383 2.370L2 12.343l.479.658h3.505c0 .526.215 1.040.586 1.412.37.370.885.586 1.412.586.526 0 1.040-.215 1.411-.586s.587-.886.587-1.412h3.505l.478-.658-.586-1.770zm-4.690 3.147a.997.997 0 0 1-.705.299.997.997 0 0 1-.706-.300.997.997 0 0 1-.300-.705h1.999a.939.939 0 0 1-.287.706zm-5.515-1.710l.371-1.114a8.633 8.633 0 0 0 .443-2.691V6.004c0-.563.120-1.113.347-1.616.227-.514.550-.969.969-1.340.419-.382.910-.670 1.436-.837.538-.18 1.100-.240 1.650-.18a4.147 4.147 0 0 1 2.597 1.400 4.133 4.133 0 0 1 1.004 2.776v2.010c0 .909.144 1.818.443 2.691l.371 1.113h-9.630v-.012z" fill="#d8d8d8" stroke="#d8d8d8" stroke-width="0.35"/></svg>
  <div class="t f12" id="s1" style="left:73.25px;top:1.00px;transform:scaleX(1.0014);">Launchpad</div>
  <div class="t f12" id="s2" style="left:164.60px;top:1.00px;transform:scaleX(0.8170);font-size:12.9px">0</div>
  <div class="t f12" id="s3" style="left:191.80px;top:1.00px;transform:scaleX(0.8400);font-size:12.9px">0</div>
  <div class="t f12" id="s4" style="left:1573.72px;top:1.00px;transform:scaleX(0.9576);">Ln 4, Col 1</div>
  <div class="t f12" id="s5" style="left:1644.66px;top:1.00px;transform:scaleX(0.9387);">Spaces: 4</div>
  <div class="t f12" id="s6" style="left:1709.68px;top:1.00px;transform:scaleX(0.9528);">UTF-8</div>
  <div class="t f12" id="s7" style="left:1756.97px;top:1.00px;transform:scaleX(0.8497);">CRLF</div>
  <div class="t f12" id="s8" style="left:1816.89px;top:1.00px;transform:scaleX(1.0101);">Batch</div>
</div>

</body>
</html>
